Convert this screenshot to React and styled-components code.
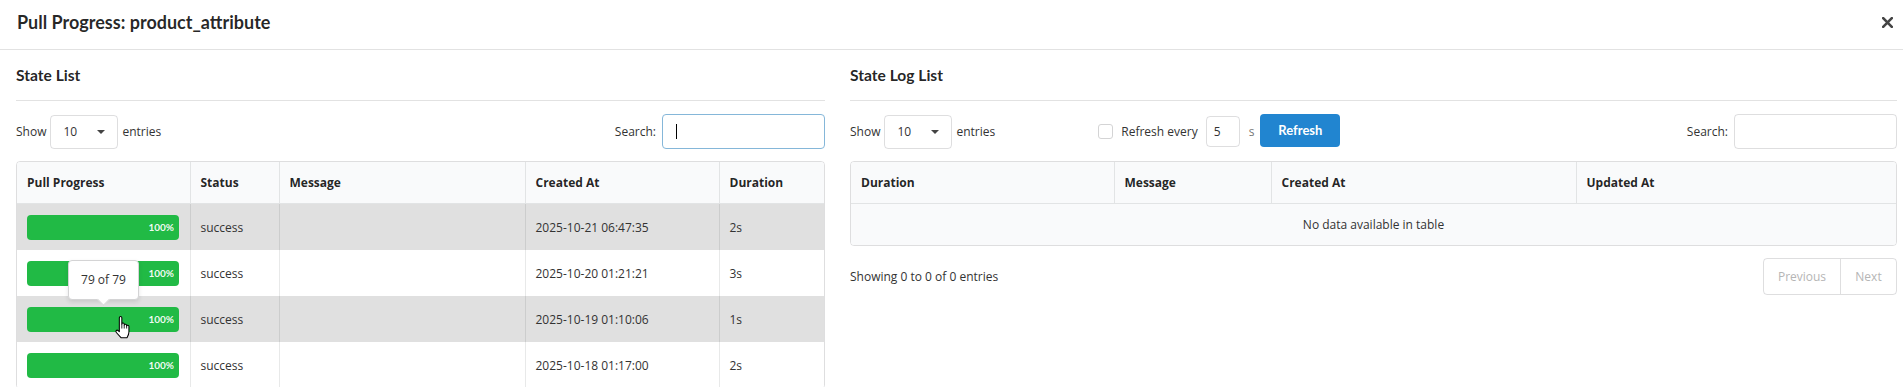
import React from 'react'
import styled, { createGlobalStyle } from 'styled-components';

const GlobalStyle = createGlobalStyle`
  body {
    margin: 0;
    background: #fff;
    font-family: "Open Sans", "Liberation Sans", sans-serif;
    font-size: 12px;
    color: #333;
  }
`;

const stateRows = [
  { date: '2025-10-21 06:47:35', duration: '2s', shaded: true },
  { date: '2025-10-20 01:21:21', duration: '3s' },
  { date: '2025-10-19 01:10:06', duration: '1s', shaded: true, hovered: true },
  { date: '2025-10-18 01:17:00', duration: '2s' },
];

const CloseIcon = () => (
  <svg width="11" height="11" viewBox="0 0 11 11">
    <path d="M1.2 1.2L9.8 9.8M9.8 1.2L1.2 9.8" stroke="#444" strokeWidth="2.6" strokeLinecap="square" />
  </svg>
);

const HandCursor = () => (
  <svg width="19" height="25" viewBox="0 0 18 24">
    <path
      d="M5 14.5V2.6C5 1.1 7.4 1.1 7.4 2.6V8.6C7.4 7.4 9.7 7.4 9.7 8.7V9.6C9.7 8.5 12 8.5 12 9.8V10.6C12 9.6 14.2 9.6 14.2 10.9V16.2C14.2 18.6 13.2 20.2 12.3 21.8H6.6L2.1 16.8C1 15.6 2.4 13.9 3.7 14.9L5 16Z"
      fill="#fff"
      stroke="#000"
      strokeWidth="1"
      strokeLinejoin="round"
    />
    <path d="M7.4 8.6V13M9.7 9.6V13M12 10.6V13" stroke="#000" strokeWidth="0.8" />
  </svg>
);

const Caret = () => (
  <svg width="8" height="4" viewBox="0 0 8 4">
    <path d="M0 0H8L4 4Z" fill="#444" />
  </svg>
);

const LengthControl = () => (
  <Length>
    <span>Show</span>
    <Select>
      <span>10</span>
      <Caret />
    </Select>
    <span>entries</span>
  </Length>
);

const SearchControl = ({ focused }) => (
  <Search>
    <span>Search:</span>
    <SearchInput $focused={focused}>{focused && <TextCursor />}</SearchInput>
  </Search>
);

const App = () => {
  return (
    <>
      <GlobalStyle />
      <Modal>
        <Header>
          <Title>Pull Progress: product_attribute</Title>
          <Close><CloseIcon /></Close>
        </Header>
        <Body>
          <Panel>
            <SectionTitle>State List</SectionTitle>
            <Controls>
              <LengthControl />
              <SearchControl focused />
            </Controls>
            <TableFrame>
              <Table>
                <colgroup>
                  <Col $w={173} />
                  <Col $w={89} />
                  <Col $w={246} />
                  <Col $w={194} />
                  <Col $w={105} />
                </colgroup>
                <thead>
                  <tr>
                    <Th>Pull Progress</Th>
                    <Th>Status</Th>
                    <Th>Message</Th>
                    <Th>Created At</Th>
                    <Th>Duration</Th>
                  </tr>
                </thead>
                <tbody>
                  {stateRows.map((r) => (
                    <Row key={r.date} $shaded={r.shaded}>
                      <Td>
                        <Bar>
                          <BarLabel>100%</BarLabel>
                          {r.hovered && (
                            <>
                              <Tooltip>79 of 79</Tooltip>
                              <Pointer><HandCursor /></Pointer>
                            </>
                          )}
                        </Bar>
                      </Td>
                      <Td>success</Td>
                      <Td></Td>
                      <Td>{r.date}</Td>
                      <Td>{r.duration}</Td>
                    </Row>
                  ))}
                </tbody>
              </Table>
            </TableFrame>
          </Panel>

          <Panel>
            <SectionTitle>State Log List</SectionTitle>
            <Controls>
              <LengthControl />
              <RefreshGroup>
                <Checkbox />
                <span>Refresh every</span>
                <SmallInput>5</SmallInput>
                <Unit>s</Unit>
                <Button>Refresh</Button>
              </RefreshGroup>
              <SearchControl />
            </Controls>
            <TableFrame>
              <Table>
                <colgroup>
                  <Col $w={263} />
                  <Col $w={157} />
                  <Col $w={305} />
                  <Col $w={320} />
                </colgroup>
                <thead>
                  <tr>
                    <Th>Duration</Th>
                    <Th>Message</Th>
                    <Th>Created At</Th>
                    <Th>Updated At</Th>
                  </tr>
                </thead>
                <tbody>
                  <tr>
                    <EmptyCell colSpan={4}>No data available in table</EmptyCell>
                  </tr>
                </tbody>
              </Table>
            </TableFrame>
            <Footer>
              <span>Showing 0 to 0 of 0 entries</span>
              <Pagination>
                <PageButton $w={76}>Previous</PageButton>
                <PageButton $w={55}>Next</PageButton>
              </Pagination>
            </Footer>
          </Panel>
        </Body>
      </Modal>
    </>
  )
}

const Modal = styled.div`
  background: #fff;
`;

const Header = styled.div`
  height: 43px;
  padding: 0 10px 6px 17px;
  display: flex;
  align-items: center;
  justify-content: space-between;
  border-bottom: 1px solid #e2e2e2;
`;

const Title = styled.div`
  font-family: Lato, "Open Sans", sans-serif;
  font-size: 18px;
  font-weight: 700;
  color: rgba(0, 0, 0, 0.85);
`;

const Close = styled.div`
  display: flex;
  align-items: center;
  padding-top: 1px;
`;

const Body = styled.div`
  display: grid;
  grid-template-columns: 809px 1047px;
  column-gap: 25px;
  padding-left: 16px;
`;

const Panel = styled.div`
  display: flex;
  flex-direction: column;
`;

const SectionTitle = styled.div`
  height: 50px;
  display: flex;
  align-items: center;
  border-bottom: 1px solid #e2e2e2;
  font-family: Lato, "Open Sans", sans-serif;
  font-size: 15.6px;
  font-weight: 700;
  color: rgba(0, 0, 0, 0.87);
`;

const Controls = styled.div`
  display: flex;
  align-items: center;
  height: 35px;
  margin: 13px 0 12px;
`;

const Length = styled.div`
  display: flex;
  align-items: center;
  gap: 4px;
`;

const Select = styled.div`
  width: 68px;
  height: 34px;
  box-sizing: border-box;
  border: 1px solid rgba(34, 36, 38, 0.15);
  border-radius: 4px;
  display: flex;
  align-items: center;
  justify-content: space-between;
  padding: 0 12px 0 12px;
`;

const Search = styled.div`
  margin-left: auto;
  display: flex;
  align-items: center;
  gap: 6px;
`;

const SearchInput = styled.div`
  width: 163px;
  height: 35px;
  box-sizing: border-box;
  border: 1px solid ${(p) => (p.$focused ? '#85b7d9' : 'rgba(34, 36, 38, 0.15)')};
  border-radius: 4px;
  display: flex;
  align-items: center;
  padding-left: 13px;
`;

const TextCursor = styled.span`
  width: 1px;
  height: 15px;
  background: #000;
`;

const RefreshGroup = styled.div`
  display: flex;
  align-items: center;
  margin-left: 103px;
`;

const Checkbox = styled.span`
  width: 15px;
  height: 15px;
  box-sizing: border-box;
  border: 1px solid #d4d4d5;
  border-radius: 3px;
  margin-right: 8px;
`;

const SmallInput = styled.div`
  width: 34px;
  height: 31px;
  box-sizing: border-box;
  border: 1px solid rgba(34, 36, 38, 0.15);
  border-radius: 4px;
  display: flex;
  align-items: center;
  padding-left: 7px;
  margin-left: 8px;
`;

const Unit = styled.span`
  color: #777;
  margin: 0 6px 0 9px;
`;

const Button = styled.div`
  width: 80px;
  height: 33px;
  margin-top: -2px;
  border-radius: 4px;
  background: #2185d0;
  color: #fff;
  font-family: Lato, "Open Sans", sans-serif;
  font-size: 13px;
  font-weight: 700;
  display: flex;
  align-items: center;
  justify-content: center;
  padding-bottom: 2px;
  box-sizing: border-box;
`;

const TableFrame = styled.div`
  border: 1px solid rgba(34, 36, 38, 0.15);
  border-radius: 4px;
  overflow: hidden;
`;

const Table = styled.table`
  width: 100%;
  table-layout: fixed;
  border-collapse: collapse;
`;

const Col = styled.col`
  width: ${(p) => p.$w}px;
`;

const Th = styled.th`
  height: 41px;
  padding: 0 10px;
  text-align: left;
  font-weight: 700;
  color: rgba(0, 0, 0, 0.87);
  background: #f9fafb;
  border-bottom: 1px solid rgba(34, 36, 38, 0.1);
  & + & {
    border-left: 1px solid rgba(34, 36, 38, 0.1);
  }
`;

const Row = styled.tr`
  background: ${(p) => (p.$shaded ? '#e0e0e0' : '#fff')};
`;

const Td = styled.td`
  height: 46px;
  padding: 0 10px;
  & + & {
    border-left: 1px solid rgba(34, 36, 38, 0.1);
  }
`;

const Bar = styled.div`
  position: relative;
  width: 152px;
  height: 25px;
  border-radius: 4px;
  background: #21ba45;
  display: flex;
  align-items: center;
  justify-content: flex-end;
  padding-right: 5px;
  box-sizing: border-box;
`;

const BarLabel = styled.span`
  font-family: Lato, "Open Sans", sans-serif;
  font-size: 10px;
  font-weight: 700;
  color: rgba(255, 255, 255, 0.95);
`;

const Tooltip = styled.div`
  position: absolute;
  left: 41px;
  bottom: calc(100% + 7px);
  width: 71px;
  height: 40px;
  box-sizing: border-box;
  background: #fff;
  border: 1px solid #d4d4d5;
  border-radius: 4px;
  box-shadow: 0 2px 4px rgba(34, 36, 38, 0.12);
  display: flex;
  align-items: center;
  justify-content: center;
  font-size: 12px;
  color: #333;
  &::after {
    content: '';
    position: absolute;
    left: 30px;
    bottom: -5px;
    width: 8px;
    height: 8px;
    background: #fff;
    border-right: 1px solid #d4d4d5;
    border-bottom: 1px solid #d4d4d5;
    transform: rotate(45deg);
  }
`;

const Pointer = styled.div`
  position: absolute;
  left: 87px;
  top: 8px;
  line-height: 0;
`;

const EmptyCell = styled.td`
  height: 39px;
  text-align: center;
  background: #f9fafb;
`;

const Footer = styled.div`
  display: flex;
  align-items: center;
  justify-content: space-between;
  margin-top: 12px;
`;

const Pagination = styled.div`
  display: flex;
  height: 37px;
  box-sizing: border-box;
  border: 1px solid rgba(34, 36, 38, 0.15);
  border-radius: 4px;
`;

const PageButton = styled.div`
  width: ${(p) => p.$w}px;
  display: flex;
  align-items: center;
  justify-content: center;
  color: #b5b5b5;
  & + & {
    border-left: 1px solid rgba(34, 36, 38, 0.15);
  }
`;

export default App;
